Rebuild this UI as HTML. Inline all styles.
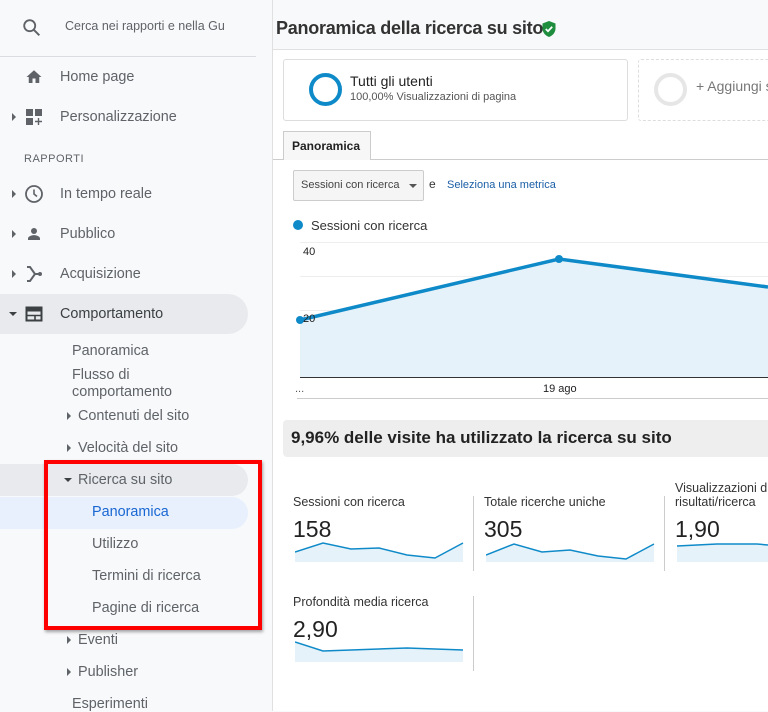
<!DOCTYPE html>
<html><head><meta charset="utf-8"><style>
*{margin:0;padding:0;box-sizing:border-box}
body{width:768px;height:711px;overflow:hidden;background:#f8f9fa;font-family:"Liberation Sans",sans-serif;position:relative;color:#3c4043}
.a{position:absolute;white-space:nowrap}
.nav{font-size:14.4px;color:#5f6368}
.sub{font-size:14.4px;color:#5f6368}
.tri{position:absolute;width:0;height:0;border-top:4px solid transparent;border-bottom:4px solid transparent;border-left:4px solid #5f6368}
.trd{position:absolute;width:0;height:0;border-left:4px solid transparent;border-right:4px solid transparent;border-top:4px solid #3c4043}
</style></head><body>
<svg class="a" style="left:21px;top:17px" width="22" height="22" viewBox="0 0 24 24"><circle cx="9.5" cy="9.5" r="6" fill="none" stroke="#5f6368" stroke-width="2"/><path d="M14 14l6 6" stroke="#5f6368" stroke-width="2.2"/></svg>
<div class="a" style="left:65px;top:19px;font-size:12.5px;color:#5f6368">Cerca nei rapporti e nella Gu</div>
<div class="a" style="left:0;top:56px;width:256px;height:1px;background:#dadce0"></div>
<svg class="a" style="left:25px;top:68px" width="18" height="18" viewBox="0 0 24 24"><path d="M10 20v-6h4v6h5v-8h3L12 3 2 12h3v8z" fill="#5f6368"/></svg>
<div class="a nav" style="left:60px;top:69px">Home page</div>
<div class="tri" style="left:12px;top:113px"></div>
<svg class="a" style="left:25px;top:108px" width="18" height="18" viewBox="0 0 18 18"><rect x="1" y="1" width="7" height="7" fill="#5f6368"/><rect x="10" y="1" width="7" height="7" fill="#5f6368"/><rect x="1" y="10" width="7" height="7" fill="#5f6368"/><path d="M13.5 10v7M10 13.5h7" stroke="#5f6368" stroke-width="1.4"/></svg>
<div class="a nav" style="left:60px;top:109px">Personalizzazione</div>
<div class="a" style="left:24px;top:153px;font-size:11px;letter-spacing:.5px;color:#5f6368">RAPPORTI</div>
<div class="tri" style="left:12px;top:190px"></div>
<svg class="a" style="left:24px;top:184px" width="20" height="20" viewBox="0 0 20 20"><circle cx="10" cy="10" r="8" fill="none" stroke="#5f6368" stroke-width="1.8"/><path d="M10 5.5V10l3 2.5" fill="none" stroke="#5f6368" stroke-width="1.6"/></svg>
<div class="a nav" style="left:60px;top:186px">In tempo reale</div>
<div class="tri" style="left:12px;top:230px"></div>
<svg class="a" style="left:25px;top:225px" width="18" height="18" viewBox="0 0 24 24"><circle cx="12" cy="8" r="4" fill="#5f6368"/><path d="M4 20v-2c0-3 5-4.5 8-4.5s8 1.5 8 4.5v2z" fill="#5f6368"/></svg>
<div class="a nav" style="left:60px;top:226px">Pubblico</div>
<div class="tri" style="left:12px;top:270px"></div>
<svg class="a" style="left:25px;top:265px" width="18" height="18" viewBox="0 0 18 18"><path d="M2 2h3l5 7-5 7H2" fill="none" stroke="#5f6368" stroke-width="2"/><path d="M10 9h4" stroke="#5f6368" stroke-width="2"/><circle cx="15" cy="9" r="2" fill="#5f6368"/></svg>
<div class="a nav" style="left:60px;top:266px">Acquisizione</div>
<div class="a" style="left:0;top:294px;width:248px;height:40px;background:#e8eaed;border-radius:0 20px 20px 0"></div>
<div class="trd" style="left:9px;top:312px"></div>
<svg class="a" style="left:25px;top:305px" width="18" height="18" viewBox="0 0 18 18"><rect x="1.5" y="2.5" width="15" height="13" fill="none" stroke="#3c4043" stroke-width="2"/><rect x="1.5" y="2.5" width="15" height="4" fill="#3c4043"/><path d="M2 10.5h14M10 10v5" stroke="#3c4043" stroke-width="1.6"/></svg>
<div class="a nav" style="left:60px;top:306px;color:#3c4043">Comportamento</div>
<div class="a sub" style="left:72px;top:343px">Panoramica</div>
<div class="a sub" style="left:72px;top:367px;line-height:17px">Flusso di<br>comportamento</div>
<div class="tri" style="left:67px;top:412px"></div>
<div class="a sub" style="left:78px;top:408px">Contenuti del sito</div>
<div class="tri" style="left:67px;top:444px"></div>
<div class="a sub" style="left:78px;top:440px">Velocità del sito</div>
<div class="a" style="left:0;top:464px;width:248px;height:32px;background:#e8eaed;border-radius:0 16px 16px 0"></div>
<div class="trd" style="left:64px;top:478px"></div>
<div class="a sub" style="left:78px;top:472px">Ricerca su sito</div>
<div class="a" style="left:0;top:497px;width:248px;height:32px;background:#e8f0fe;border-radius:0 16px 16px 0"></div>
<div class="a sub" style="left:92px;top:504px;color:#1967d2">Panoramica</div>
<div class="a sub" style="left:92px;top:536px">Utilizzo</div>
<div class="a sub" style="left:92px;top:568px">Termini di ricerca</div>
<div class="a sub" style="left:92px;top:600px">Pagine di ricerca</div>
<div class="a" style="left:44px;top:460px;width:218px;height:170px;border:4px solid #f00;box-shadow:1px 2px 3px rgba(0,0,0,.35)"></div>
<div class="tri" style="left:67px;top:636px"></div>
<div class="a sub" style="left:78px;top:632px">Eventi</div>
<div class="tri" style="left:67px;top:668px"></div>
<div class="a sub" style="left:78px;top:664px">Publisher</div>
<div class="a sub" style="left:72px;top:696px">Esperimenti</div>
<div class="a" style="left:272px;top:0;width:1px;height:711px;background:#e0e0e0"></div>
<div class="a" style="left:273px;top:49px;width:495px;height:662px;background:#fff;border-top:1px solid #e0e0e0"></div>
<div class="a" style="left:276px;top:18px;font-size:18px;font-weight:bold;color:#333;letter-spacing:-0.25px">Panoramica della ricerca su sito</div>
<svg class="a" style="left:541px;top:20px" width="16" height="18" viewBox="0 0 16 18"><path d="M8 1l6.5 2.5v5c0 4-2.8 7-6.5 8.5C4.3 15.5 1.5 12.5 1.5 8.5v-5z" fill="#1e8e3e"/><path d="M4.8 9l2.2 2.2 4.2-4.4" fill="none" stroke="#fff" stroke-width="1.8"/></svg>
<div class="a" style="left:283px;top:59px;width:345px;height:62px;border:1px solid #ddd;border-radius:3px;background:#fff"></div>
<div class="a" style="left:309px;top:73px;width:33px;height:33px;border:4px solid #0f8ac9;border-radius:50%"></div>
<div class="a" style="left:350px;top:73px;font-size:14px;color:#222">Tutti gli utenti</div>
<div class="a" style="left:350px;top:91px;font-size:11px;color:#555">100,00% Visualizzazioni di pagina</div>
<div class="a" style="left:638px;top:59px;width:140px;height:62px;border:1px dashed #ddd;border-radius:3px"></div>
<div class="a" style="left:654px;top:73px;width:33px;height:33px;border:4px solid #e6e6e6;border-radius:50%"></div>
<div class="a" style="left:696px;top:78px;font-size:14px;color:#777">+ Aggiungi s</div>
<div class="a" style="left:273px;top:159px;width:495px;height:1px;background:#ccc"></div>
<div class="a" style="left:283px;top:131px;width:88px;height:29px;border:1px solid #ccc;border-bottom:none;background:#f7f7f7"></div>
<div class="a" style="left:292px;top:139px;font-size:12px;font-weight:bold;color:#222">Panoramica</div>
<div class="a" style="left:293px;top:170px;width:131px;height:31px;border:1px solid #ccc;border-radius:2px;background:#f5f5f5"></div>
<div class="a" style="left:301px;top:179px;font-size:11px;color:#444">Sessioni con ricerca</div>
<div class="trd" style="left:409px;top:184px;border-top-color:#555"></div>
<div class="a" style="left:429px;top:177px;font-size:12px;color:#333">e</div>
<div class="a" style="left:447px;top:179px;font-size:11px;color:#1a5ea6">Seleziona una metrica</div>
<div class="a" style="left:293px;top:220px;width:10px;height:10px;border-radius:50%;background:#0f8ac9"></div>
<div class="a" style="left:311px;top:218px;font-size:13px;color:#333">Sessioni con ricerca</div>
<svg class="a" style="left:273px;top:230px" width="495" height="180">
<g stroke="#eee" stroke-width="1"><path d="M27 12.5H495M27 46.5H495M27 80.5H495M27 113.5H495"/></g>
<path d="M27 90L286 29L495 57V147H27z" fill="#e6f2f9"/>
<path d="M27 90L286 29L495 57" fill="none" stroke="#0f8ac9" stroke-width="3.5"/>
<circle cx="27" cy="90" r="4" fill="#0f8ac9"/><circle cx="286" cy="29" r="4" fill="#0f8ac9"/>
<path d="M27 147.5H495" stroke="#333" stroke-width="1"/>
<path d="M24 168.5H495" stroke="#ccc" stroke-width="1"/>
<text x="30" y="25" font-size="11" font-family="Liberation Sans" fill="#222">40</text>
<text x="30" y="92" font-size="11" font-family="Liberation Sans" fill="#222">20</text>
<text x="22" y="162" font-size="11" font-family="Liberation Sans" fill="#555">...</text>
<text x="270" y="162" font-size="11" font-family="Liberation Sans" fill="#222">19 ago</text>
</svg>
<div class="a" style="left:283px;top:420px;width:485px;height:37px;background:#eee;border-radius:4px 0 0 4px"></div>
<div class="a" style="left:291px;top:428px;font-size:17px;font-weight:bold;color:#222">9,96% delle visite ha utilizzato la ricerca su sito</div>
<div class="a" style="left:473px;top:496px;width:1px;height:75px;background:#ccc"></div>
<div class="a" style="left:664px;top:496px;width:1px;height:75px;background:#ccc"></div>
<div class="a" style="left:473px;top:596px;width:1px;height:75px;background:#ccc"></div>
<div class="a" style="left:293px;top:495px;font-size:12.5px;color:#333">Sessioni con ricerca</div>
<div class="a" style="left:293px;top:516px;font-size:23px;color:#222">158</div>
<div class="a" style="left:484px;top:495px;font-size:12.5px;color:#333">Totale ricerche uniche</div>
<div class="a" style="left:484px;top:516px;font-size:23px;color:#222">305</div>
<div class="a" style="left:675px;top:481px;font-size:12.5px;color:#333;line-height:14px">Visualizzazioni d<br>risultati/ricerca</div>
<div class="a" style="left:675px;top:516px;font-size:23px;color:#222">1,90</div>
<div class="a" style="left:293px;top:595px;font-size:12.5px;color:#333">Profondità media ricerca</div>
<div class="a" style="left:293px;top:616px;font-size:23px;color:#222">2,90</div>
<svg class="a" style="left:295px;top:540px" width="170" height="22"><path d="M0 12L28 3L56 9L84 8L112 15L140 18L168 3V22H0z" fill="#e6f2f9"/><path d="M0 12L28 3L56 9L84 8L112 15L140 18L168 3" fill="none" stroke="#0f8ac9" stroke-width="1.5"/></svg>
<svg class="a" style="left:486px;top:540px" width="170" height="22"><path d="M0 15L28 4L56 12L84 10L112 16L140 19L168 4V22H0z" fill="#e6f2f9"/><path d="M0 15L28 4L56 12L84 10L112 16L140 19L168 4" fill="none" stroke="#0f8ac9" stroke-width="1.5"/></svg>
<svg class="a" style="left:677px;top:540px" width="91" height="22"><path d="M0 6L40 4L80 4L91 5V22H0z" fill="#e6f2f9"/><path d="M0 6L40 4L80 4L91 5" fill="none" stroke="#0f8ac9" stroke-width="1.5"/></svg>
<svg class="a" style="left:295px;top:640px" width="170" height="22"><path d="M0 2L28 11L56 10L84 9L112 8L140 9L168 10V22H0z" fill="#e6f2f9"/><path d="M0 2L28 11L56 10L84 9L112 8L140 9L168 10" fill="none" stroke="#0f8ac9" stroke-width="1.5"/></svg>
</body></html>
